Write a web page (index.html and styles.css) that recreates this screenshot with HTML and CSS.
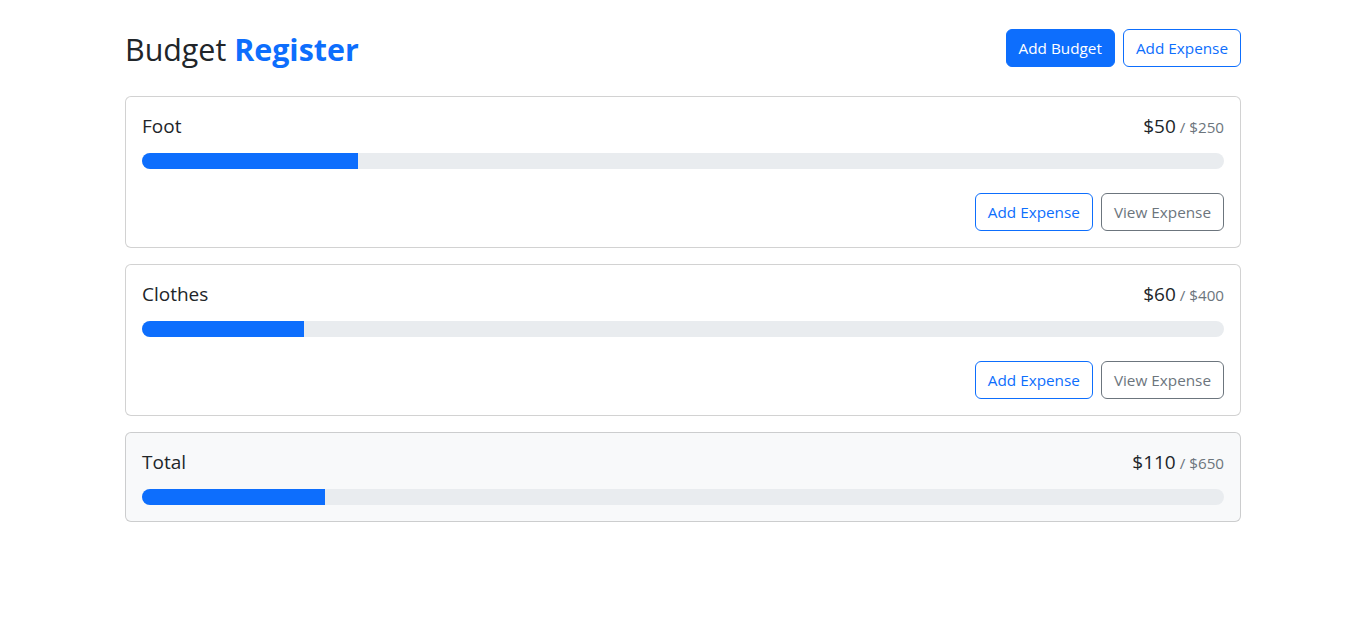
FILE: index.html
```html
<!DOCTYPE html>
<html lang="en">
<head>
<meta charset="utf-8">
<title>Budget Register</title>
<link rel="stylesheet" href="styles.css">
</head>
<body>
<div class="container">
  <div class="header">
    <h1 class="title">Budget <span class="title-accent">Register</span></h1>
    <button class="btn btn-primary">Add Budget</button>
    <button class="btn btn-outline-primary">Add Expense</button>
  </div>
  <div class="cards">
    <div class="card">
      <div class="card-title">
        <div class="name">Foot</div>
        <div class="amount">$50<span class="max">/ $250</span></div>
      </div>
      <div class="progress"><div class="progress-bar" style="width:20%"></div></div>
      <div class="actions">
        <button class="btn btn-outline-primary">Add Expense</button>
        <button class="btn btn-outline-secondary">View Expense</button>
      </div>
    </div>
    <div class="card">
      <div class="card-title">
        <div class="name">Clothes</div>
        <div class="amount">$60<span class="max">/ $400</span></div>
      </div>
      <div class="progress"><div class="progress-bar" style="width:15%"></div></div>
      <div class="actions">
        <button class="btn btn-outline-primary">Add Expense</button>
        <button class="btn btn-outline-secondary">View Expense</button>
      </div>
    </div>
    <div class="card card-light">
      <div class="card-title">
        <div class="name">Total</div>
        <div class="amount">$110<span class="max">/ $650</span></div>
      </div>
      <div class="progress"><div class="progress-bar" style="width:16.923%"></div></div>
    </div>
  </div>
</div>
</body>
</html>
```
FILE: styles.css
```css
* { box-sizing: border-box; }
body {
  margin: 0;
  font-family: "Open Sans", "Noto Sans", sans-serif;
  font-size: 15.3px;
  line-height: 24px;
  color: #212529;
  background: #fff;
}
.container {
  width: 1140px;
  margin: 24px auto;
  padding: 0 12px;
}
.header {
  display: flex;
  align-items: center;
  gap: 8px;
  height: 48px;
  margin-bottom: 24px;
}
.title {
  margin: 0 auto 0 0;
  font-size: 30.4px;
  font-weight: 400;
  line-height: 48px;
  position: relative;
  top: 2px;
}
.title-accent {
  color: #0d6efd;
  font-weight: 700;
}
.btn {
  font-family: inherit;
  font-size: 15.3px;
  line-height: 24px;
  padding: 6px 12px;
  border-radius: 6px;
  border: 1px solid transparent;
  background: transparent;
  cursor: pointer;
}
.btn-primary { background: #0d6efd; border-color: #0d6efd; color: #fff; }
.btn-outline-primary { border-color: #0d6efd; color: #0d6efd; }
.btn-outline-secondary { border-color: #6c757d; color: #6c757d; }
.cards {
  display: grid;
  gap: 16px;
}
.card {
  border: 1px solid rgba(0,0,0,0.175);
  border-radius: 6px;
  padding: 16px;
  background: #fff;
}
.card-light { background: #f8f9fa; }
.card-title {
  display: flex;
  justify-content: space-between;
  align-items: baseline;
  font-size: 19px;
  line-height: 24px;
  height: 24px;
  margin-bottom: 16px;
  padding-top: 1px;
}
.amount {
  display: flex;
  align-items: baseline;
}
.max {
  font-size: 15.2px;
  line-height: 16px;
  color: #6c757d;
  margin-left: 4px;
}
.progress {
  height: 16px;
  background: #e9ecef;
  border-radius: 50rem;
  overflow: hidden;
  display: flex;
}
.progress-bar { background: #0d6efd; height: 100%; }
.actions {
  display: flex;
  justify-content: flex-end;
  gap: 8px;
  margin-top: 24px;
}
```
